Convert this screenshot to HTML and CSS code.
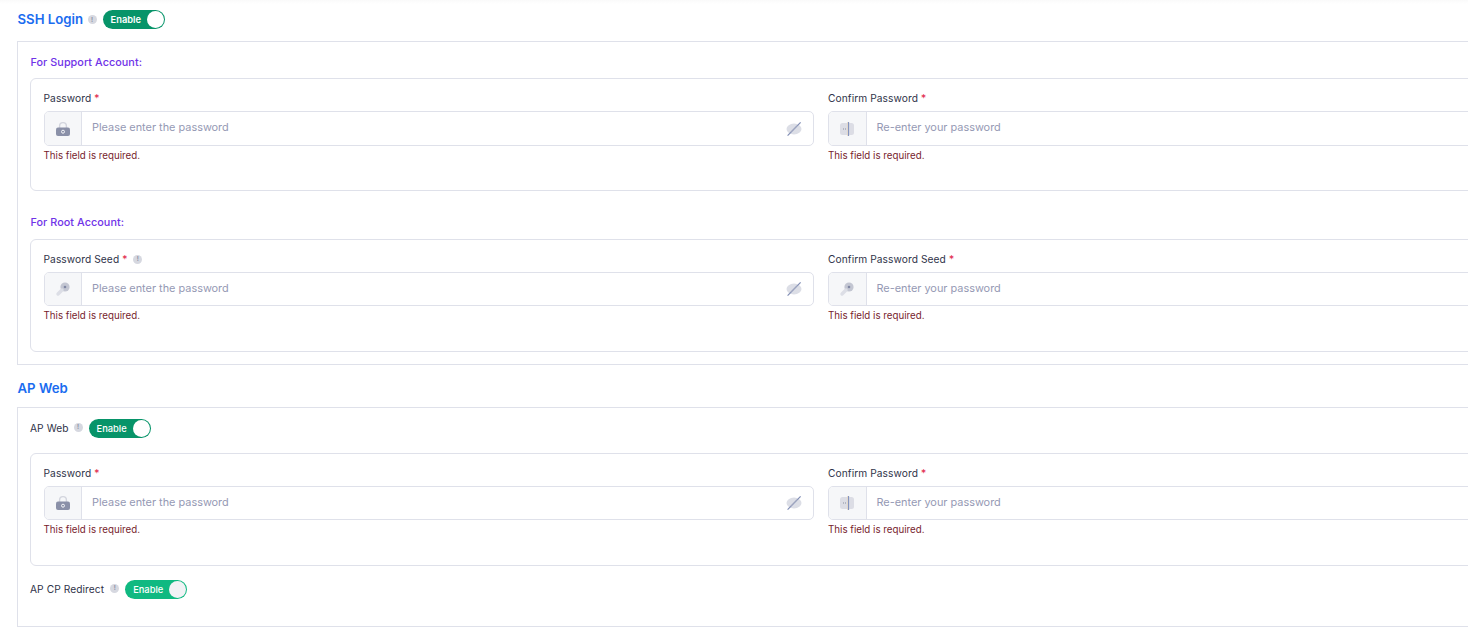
FILE: index.html
```html
<!DOCTYPE html>
<html lang="en">
<head>
<meta charset="utf-8">
<title>Access settings</title>
<link rel="stylesheet" href="styles.css">
</head>
<body>
<svg width="0" height="0" class="defs">
  <defs>
    <symbol id="lock" viewBox="0 0 16 16">
      <path d="M4.6 7V5a3.4 3.4 0 0 1 6.8 0v2" fill="none" stroke="#d3d5de" stroke-width="1.4"/>
      <rect x="1" y="6.5" width="14" height="8.5" rx="2" fill="#8a90a8"/>
      <circle cx="8" cy="10.7" r="1.5" fill="none" stroke="#f4f5f8" stroke-width="1"/>
    </symbol>
    <symbol id="door" viewBox="0 0 16 16">
      <rect x="1" y="2" width="14" height="12" rx="2.5" fill="#dcdde5"/>
      <path d="M4 8h1M6 8h1" stroke="#8a8f9f" stroke-width="1"/>
      <path d="M9.5 1v14" stroke="#7c8fc0" stroke-width="1.2"/>
      <path d="M8.6 1v14" stroke="#ecd9bd" stroke-width=".7"/>
    </symbol>
    <symbol id="key" viewBox="0 0 16 16">
      <circle cx="10" cy="6" r="4.6" fill="#c3c6d2"/>
      <circle cx="10" cy="6" r="1.3" fill="#8087a3"/>
      <path d="M7 9l-4 4" stroke="#dcdee6" stroke-width="3.4" stroke-linecap="round"/>
    </symbol>
    <symbol id="eye" viewBox="0 0 16 16">
      <ellipse cx="8" cy="8" rx="7.5" ry="5.4" fill="#dcdee6"/>
      <path d="M14.6 1.4L1.6 14.6" stroke="#7f8cb4" stroke-width="1.2"/>
      <path d="M11 4.6L4.4 11.4" stroke="#a9aec2" stroke-width="1"/>
    </symbol>
  </defs>
</svg>

<main class="page">
  <div class="heading-row">
    <h2 class="section-title">SSH Login</h2>
    <span class="info">!</span>
    <span class="toggle toggle-dark"><span class="toggle-text toggle-text-bold">Enable</span><span class="knob"></span></span>
  </div>

  <section class="card card-ssh">
    <h3 class="sub-title">For Support Account:</h3>
    <div class="box">
      <div class="field">
        <label class="label">Password <span class="req">*</span></label>
        <div class="input-group tall">
          <span class="addon"><svg class="icon"><use href="#lock"/></svg></span>
          <span class="placeholder">Please enter the password</span>
          <svg class="eye"><use href="#eye"/></svg>
        </div>
        <p class="error">This field is required.</p>
      </div>
      <div class="field">
        <label class="label">Confirm Password <span class="req">*</span></label>
        <div class="input-group tall">
          <span class="addon"><svg class="icon"><use href="#door"/></svg></span>
          <span class="placeholder">Re-enter your password</span>
        </div>
        <p class="error">This field is required.</p>
      </div>
    </div>

    <h3 class="sub-title sub-title-next">For Root Account:</h3>
    <div class="box box-next">
      <div class="field">
        <label class="label">Password Seed <span class="req">*</span> <span class="info info-label">!</span></label>
        <div class="input-group">
          <span class="addon"><svg class="icon"><use href="#key"/></svg></span>
          <span class="placeholder">Please enter the password</span>
          <svg class="eye"><use href="#eye"/></svg>
        </div>
        <p class="error">This field is required.</p>
      </div>
      <div class="field">
        <label class="label">Confirm Password Seed <span class="req">*</span></label>
        <div class="input-group">
          <span class="addon"><svg class="icon"><use href="#key"/></svg></span>
          <span class="placeholder">Re-enter your password</span>
        </div>
        <p class="error">This field is required.</p>
      </div>
    </div>
  </section>

  <h2 class="section-title section-title-web">AP Web</h2>

  <section class="card card-web">
    <div class="switch-row">
      <span class="switch-label switch-label-web">AP Web</span>
      <span class="info info-row">!</span>
      <span class="toggle toggle-dark"><span class="toggle-text">Enable</span><span class="knob"></span></span>
    </div>
    <div class="box box-web">
      <div class="field">
        <label class="label">Password <span class="req">*</span></label>
        <div class="input-group">
          <span class="addon"><svg class="icon"><use href="#lock"/></svg></span>
          <span class="placeholder">Please enter the password</span>
          <svg class="eye"><use href="#eye"/></svg>
        </div>
        <p class="error">This field is required.</p>
      </div>
      <div class="field">
        <label class="label">Confirm Password <span class="req">*</span></label>
        <div class="input-group">
          <span class="addon"><svg class="icon"><use href="#door"/></svg></span>
          <span class="placeholder">Re-enter your password</span>
        </div>
        <p class="error">This field is required.</p>
      </div>
    </div>
    <div class="switch-row switch-row-cp">
      <span class="switch-label">AP CP Redirect</span>
      <span class="info info-row">!</span>
      <span class="toggle toggle-light"><span class="toggle-text">Enable</span><span class="knob knob-grey"></span></span>
    </div>
  </section>
</main>
</body>
</html>
```
FILE: styles.css
```css
* { box-sizing: border-box; }
html, body { margin: 0; height: 629px; overflow: hidden; background: #fff; }
body { font-family: Inter, "Liberation Sans", sans-serif; color: #2f3349; }
.defs { position: absolute; }
.page { width: 1600px; padding: 9px 0 0 17px; background: linear-gradient(#fafafa, #fff 4px); height: 629px; }

.heading-row { display: flex; align-items: center; height: 21px; }
.section-title { margin: 0; padding-left: 0.5px; font-size: 13.2px; line-height: 21px; font-weight: 600; color: #1a6cf0; }
.section-title-web { margin-top: 13px; }

.info {
  display: inline-flex; align-items: center; justify-content: center;
  width: 9px; height: 9px; border-radius: 50%;
  background: #d6d8e0; color: #8b8fa3; font-size: 6px; font-weight: 700; line-height: 1;
}
.heading-row .info { margin: 0 6px 0 4.5px; }
.info-label { margin-left: 3px; vertical-align: 2px; }
.info-row { margin: -3px 6px 0 6px; }

.toggle { display: inline-flex; align-items: center; justify-content: space-between; width: 62px; height: 19px; border-radius: 10px; padding: 0 1px 0 8px; }
.toggle-dark { background: #079469; }
.toggle-light { background: #10b981; }
.toggle-text { color: #fff; font-size: 9.3px; font-weight: 500; line-height: 1; }
.toggle-text-bold { font-weight: 600; }
.knob { width: 17px; height: 17px; border-radius: 50%; background: #fff; }
.knob-grey { background: #f1f2f5; }

.card { border: 1px solid #dfe1ea; padding: 0 12px; }
.card-ssh { margin-top: 11px; height: 324px; padding-top: 12px; }
.card-web { margin-top: 8px; height: 220px; padding-top: 11px; }

.sub-title { margin: 0; padding-left: 0.5px; font-size: 10.8px; line-height: 17px; font-weight: 500; letter-spacing: .06px; color: #7033e8; }
.sub-title-next { margin-top: 23px; }

.box { display: grid; grid-template-columns: 770.5px 770.5px; column-gap: 14px; border: 1px solid #dfe1ea; border-radius: 6px; padding: 13px 13px 0 12.5px; margin-top: 7px; height: 113px; }
.box-next { margin-top: 8px; }
.box-web { margin-top: 15px; }

.label { display: block; margin-top: -1px; font-size: 10.2px; line-height: 14px; font-weight: 400; letter-spacing: .08px; color: #2f3349; }
.req { color: #e11d48; }
.input-group { display: flex; align-items: center; height: 34px; margin-top: 6px; border: 1px solid #dfe1ea; border-radius: 5px; background: #fff; }
.tall { height: 35px; }
.addon { display: flex; align-items: center; justify-content: center; flex: none; width: 37.5px; height: 100%; background: #f6f7f9; border-right: 1px solid #dfe1ea; border-radius: 4px 0 0 4px; }
.icon { width: 16px; height: 16px; }
.placeholder { flex: 1; padding: 0 0 2px 10px; font-size: 10.9px; color: #9599b4; }
.tall .placeholder { padding-bottom: 3px; }
.eye { width: 16px; height: 16px; margin-right: 11px; }
.error { margin: 3px 0 0; font-size: 9.75px; line-height: 13px; color: #761c2c; }

.switch-row { display: flex; align-items: center; height: 19px; }
.switch-label { margin-top: -2px; font-size: 10.2px; font-weight: 400; letter-spacing: .08px; color: #2f3349; }
.switch-label-web { margin-right: -1px; }
.switch-row-cp { margin-top: 14px; }
```
